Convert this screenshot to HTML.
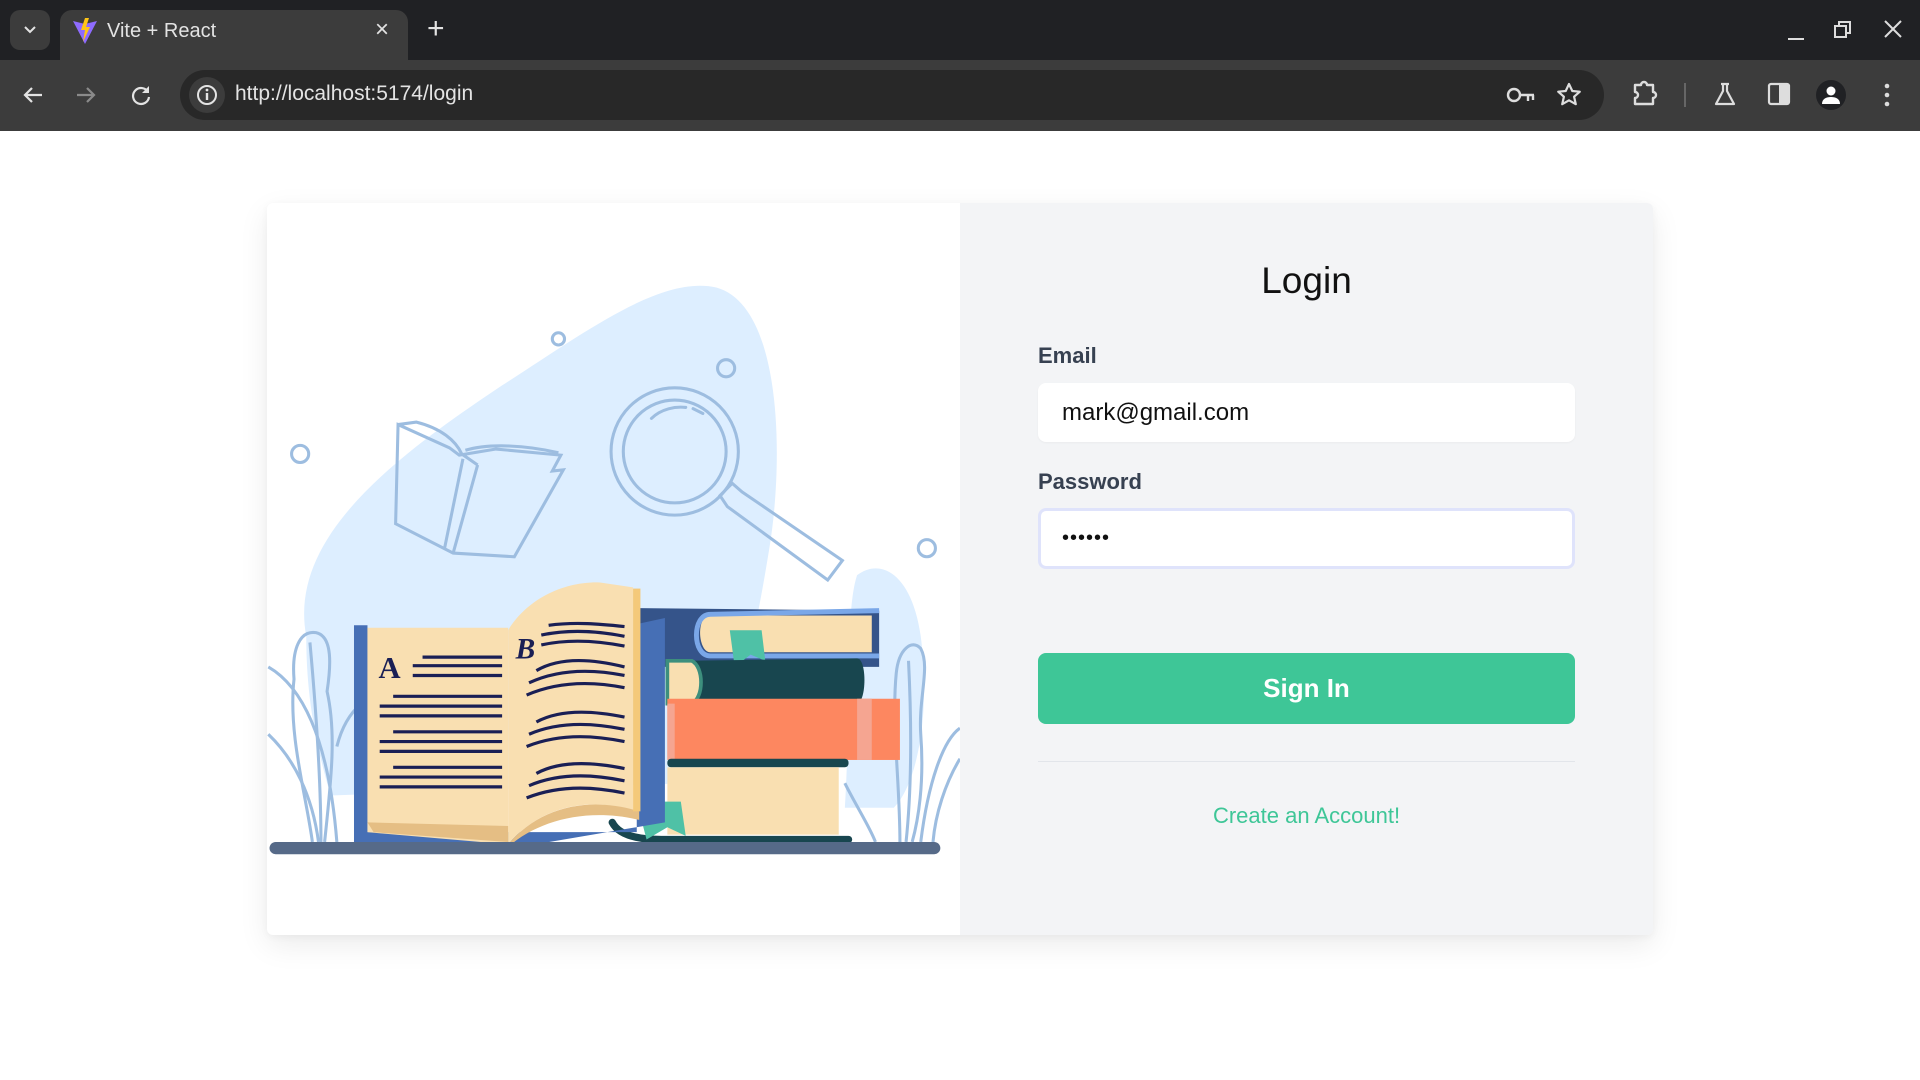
<!DOCTYPE html>
<html><head><meta charset="utf-8"><style>
*{margin:0;padding:0;box-sizing:border-box}
body{width:1920px;height:1080px;background:#fff;font-family:"Liberation Sans",sans-serif;position:relative;overflow:hidden}
.tabs{position:absolute;left:0;top:0;width:1920px;height:60px;background:#202124}
.toolbar{position:absolute;left:0;top:60px;width:1920px;height:71px;background:#3c3c3c}
.tab{position:absolute;left:60px;top:10px;width:348px;height:50px;background:#3c3c3c;border-radius:12px 12px 0 0;color:#e3e3e3;font-size:20px}
.omni{position:absolute;left:180px;top:10px;width:1424px;height:50px;background:#282828;border-radius:25px}
.card{position:absolute;left:267px;top:203px;width:1386px;height:732px;background:#fff;box-shadow:0 10px 30px rgba(0,0,0,.08),0 2px 8px rgba(0,0,0,.04);border-radius:6px;overflow:hidden}
.right{position:absolute;left:693px;top:0;width:693px;height:732px;background:#f3f4f6}
.lbl{position:absolute;left:78px;font-size:22px;font-weight:bold;color:#374151}
.inp{position:absolute;left:78px;width:537px;height:59px;background:#fff;border-radius:8px;font-size:24px;color:#111;padding-left:24px;line-height:59px}
</style></head><body>
<div class="tabs">
 <div style="position:absolute;left:10px;top:10px;width:40px;height:40px;background:#3c3c3c;border-radius:10px"></div>
 <svg style="position:absolute;left:22px;top:24px" width="16" height="12"><path d="M3 3l5 5 5-5" stroke="#e3e3e3" stroke-width="2" fill="none"/></svg>
 <div class="tab">
  <svg style="position:absolute;left:12px;top:8px" width="26" height="28" viewBox="0 0 26 28"><path d="M1 3L13 26 25 3 13 6Z" fill="#8e6bff"/><path d="M13 0l-4 12h4l-2 12 7-15h-4l3-9Z" fill="#ffc517"/></svg>
  <span style="position:absolute;left:47px;top:10px">Vite + React</span>
  <span style="position:absolute;left:315px;top:6px;font-size:24px">×</span>
 </div>
 <span style="position:absolute;left:427px;top:12px;color:#e3e3e3;font-size:30px">+</span>
 <div style="position:absolute;left:1788px;top:38px;width:16px;height:2px;background:#ddd"></div>
 <svg style="position:absolute;left:1834px;top:20px" width="18" height="18"><path d="M1 6h11v11H1zM5 6V2h11v11h-4" stroke="#ddd" stroke-width="2" fill="none"/></svg>
 <svg style="position:absolute;left:1884px;top:20px" width="18" height="18"><path d="M1 1l16 16M17 1L1 17" stroke="#ddd" stroke-width="2"/></svg>
</div>
<div class="toolbar">
 <svg style="position:absolute;left:22px;top:24px" width="22" height="22"><path d="M20 11H3M10 4l-7 7 7 7" stroke="#e3e3e3" stroke-width="2.2" fill="none"/></svg>
 <svg style="position:absolute;left:75px;top:24px" width="22" height="22"><path d="M2 11h17M12 4l7 7-7 7" stroke="#8a8a8a" stroke-width="2.2" fill="none"/></svg>
 <svg style="position:absolute;left:130px;top:24px" width="22" height="22"><path d="M18 8A8 8 0 1 0 19 13" stroke="#e3e3e3" stroke-width="2.2" fill="none"/><path d="M19 2v7h-7" fill="#e3e3e3"/></svg>
 <div class="omni">
  <div style="position:absolute;left:9px;top:7px;width:36px;height:36px;border-radius:18px;background:#3c3c3c"></div>
  <svg style="position:absolute;left:16px;top:14px" width="22" height="22"><circle cx="11" cy="11" r="9" stroke="#e3e3e3" stroke-width="2" fill="none"/><path d="M11 9v7" stroke="#e3e3e3" stroke-width="2.4"/><circle cx="11" cy="6" r="1.4" fill="#e3e3e3"/></svg>
  <span style="position:absolute;left:55px;top:12px;color:#e3e3e3;font-size:21px">http://localhost:5174/login</span>
  <svg style="position:absolute;left:1326px;top:14px" width="30" height="22"><circle cx="8" cy="11" r="6" stroke="#ddd" stroke-width="2.4" fill="none"/><path d="M14 11h14M22 11v6M27 11v5" stroke="#ddd" stroke-width="2.4" fill="none"/></svg>
  <svg style="position:absolute;left:1376px;top:12px" width="26" height="26"><path d="M13 2l3.3 7 7.5.7-5.7 5 1.7 7.5L13 18.3 6.2 22.2 7.9 14.7 2.2 9.7 9.7 9Z" stroke="#ddd" stroke-width="2.2" fill="none" stroke-linejoin="round"/></svg>
 </div>
 <svg style="position:absolute;left:1632px;top:19px" width="26" height="28"><path d="M3 6h6a3 3 0 0 1 6 0h6v7a3 3 0 0 1 0 6v6H3v-6a3 3 0 0 0 0-6z" stroke="#ddd" stroke-width="2.4" fill="none" stroke-linejoin="round"/></svg>
 <div style="position:absolute;left:1684px;top:23px;width:2px;height:24px;background:#666"></div>
 <svg style="position:absolute;left:1713px;top:22px" width="24" height="24"><path d="M8 2h8M10 2v7L3 22h18L14 9V2" stroke="#ddd" stroke-width="2.2" fill="none" stroke-linejoin="round"/></svg>
 <svg style="position:absolute;left:1767px;top:22px" width="24" height="24"><rect x="2" y="2" width="20" height="20" rx="2" stroke="#ddd" stroke-width="2.2" fill="none"/><rect x="12" y="2" width="10" height="20" fill="#ddd"/></svg>
 <div style="position:absolute;left:1816px;top:20px;width:30px;height:30px;border-radius:15px;background:#202124"></div>
 <svg style="position:absolute;left:1820px;top:24px" width="22" height="22"><circle cx="11" cy="7" r="4.5" fill="#fff"/><path d="M2 20c0-5 4-7 9-7s9 2 9 7z" fill="#fff"/></svg>
 <svg style="position:absolute;left:1883px;top:22px" width="8" height="26"><circle cx="4" cy="4" r="2.3" fill="#ddd"/><circle cx="4" cy="13" r="2.3" fill="#ddd"/><circle cx="4" cy="22" r="2.3" fill="#ddd"/></svg>
</div>

<div class="card">
 <svg style="position:absolute;left:0;top:0" width="693" height="732" viewBox="218 166 566 598">
  <path d="M250,520 C235,440 320,375 410,315 C480,270 540,225 585,235 C640,250 640,380 628,450 C615,530 600,600 560,640 L270,650 C255,600 250,560 250,520Z" fill="#ddeeff"/>
  <path d="M700,470 C720,455 745,470 752,520 C760,580 750,640 730,660 L690,660 C695,580 690,500 700,470Z" fill="#ddeeff"/>
  <g stroke="#9dbde0" stroke-width="2.5" fill="none">
   <circle cx="456" cy="277" r="5"/><circle cx="593" cy="301" r="7"/><circle cx="245" cy="371" r="7"/><circle cx="757" cy="448" r="7"/>
   <circle cx="551" cy="369" r="52"/><circle cx="551" cy="369" r="42"/>
   <path d="M532,342 C540,334 552,332 560,333 M566,334 l8,4" stroke-linecap="round"/>
   <path d="M588,405 L598,395 L606,402 L688,458 L676,474 L594,414 Z"/>
   <path d="M325,347 L367,366 L375,372 L405,367 L458,372 L451,385 L460,384 L420,455 L370,452 L323,428 Z"/>
   <path d="M325,347 L340,345 C360,350 372,360 377,371 M377,371 L390,380 M390,380 L370,452 M378,375 L363,448 M380,368 C400,362 430,364 456,370"/>
   <path d="M255,688 C250,650 235,600 240,555 C238,530 245,515 258,517 C272,520 270,545 267,565 C275,600 270,640 265,688 M253,525 C258,580 262,640 262,688"/>
   <path d="M219,545 C245,560 268,600 275,688 M219,600 C240,620 255,650 260,688 M275,610 C280,590 289,580 295,575"/>
   <path d="M735,688 C735,640 728,590 732,550 C734,530 745,522 752,530 C760,545 750,570 752,600 C755,640 750,670 745,688 M742,540 C745,600 744,650 740,688"/>
   <path d="M784,595 C770,605 758,640 752,688 M784,620 C772,640 764,665 762,688 M690,640 C700,660 710,675 715,688"/>
  </g>
  <path d="M522,497 L718,499 L718,545 L522,545 Z" fill="#35548a"/>
  <path d="M580,503 L712,503 L712,533 L580,533 C570,533 568,503 580,503Z" fill="#f9dfb1"/>
  <path d="M718,499 L580,502 C565,502 565,536 580,536 L718,536" stroke="#7aa7e8" stroke-width="4" fill="none"/>
  <path d="M596,515 L622,515 L625,540 L613,535 L600,545 Z" fill="#4fc1a6"/>
  <path d="M560,540 L700,538 C708,538 708,573 700,575 L560,575 Z" fill="#18464f"/>
  <path d="M545,540 L565,540 C575,545 575,570 565,575 L545,575 Z" fill="#f9dfb1" stroke="#3d8f7d" stroke-width="3"/>
  <rect x="545" y="571" width="190" height="50" fill="#fd8760"/>
  <rect x="700" y="571" width="12" height="50" fill="#f5a591"/>
  <rect x="545" y="575" width="6" height="46" fill="#f5a591"/>
  <rect x="545" y="620" width="148" height="7" rx="3" fill="#18464f"/>
  <rect x="545" y="627" width="140" height="55" fill="#f9dfb1"/>
  <path d="M500,672 C505,682 520,686 540,686 L693,686" stroke="#18464f" stroke-width="6" fill="none" stroke-linecap="round"/>
  <path d="M520,655 L556,655 L560,683 L545,676 L528,686 Z" fill="#4fc1a6"/>
  <path d="M289,511 L300,511 L300,680 L520,680 L520,510 L543,505 L543,672 L425,692 L289,690 Z" fill="#466fb5"/>
  <path d="M300,513 L415,513 L415,690 L300,680 Z" fill="#f9dfb1"/>
  <path d="M300,672 L415,675 L415,688 L305,680 Z" fill="#e5be84"/>
  <path d="M415,515 C430,490 460,475 490,476 L517,480 L517,663 C480,650 440,660 415,690 Z" fill="#f9dfb1"/>
  <path d="M415,690 C440,660 480,650 522,663 L522,670 C480,660 440,670 415,692Z" fill="#e5be84"/>
  <rect x="517" y="481" width="6" height="182" fill="#f4c97a"/>
  <text x="309" y="554" font-family="Liberation Serif,serif" font-weight="bold" font-size="25" fill="#1a1f55">A</text>
  <text x="421" y="538" font-family="Liberation Serif,serif" font-weight="bold" font-style="italic" font-size="24" fill="#1a1f55">B</text>
  <g stroke="#1a1f55" stroke-width="2.6" fill="none">
   <path d="M345,537H410M337,544H410M337,552H410M321,569H410M310,577H410M310,585H410M321,598H410M310,606H410M310,614H410M321,627H410M310,635H410M310,643H410"/>
   <path d="M448,511C470,508 490,510 510,512M442,519C465,514 490,516 510,520M442,527C465,522 490,524 510,528"/>
   <path d="M438,548C460,535 490,540 510,545M432,558C460,545 490,548 510,552M430,568C460,555 490,558 510,562"/>
   <path d="M438,590C460,578 490,582 510,586M432,600C460,588 490,592 510,596M430,610C460,598 490,602 510,606"/>
   <path d="M438,632C460,620 490,624 510,628M432,642C460,630 490,634 510,638M430,652C460,640 490,644 510,648"/>
  </g>
  <rect x="220" y="688" width="548" height="10" rx="5" fill="#566a88"/>
 </svg>
 <div class="right">
  <div style="position:absolute;left:0;width:693px;top:57px;text-align:center;font-size:37px;color:#111">Login</div>
  <div class="lbl" style="top:140px">Email</div>
  <div class="inp" style="top:180px;box-shadow:0 1px 2px rgba(0,0,0,.04)">mark@gmail.com</div>
  <div class="lbl" style="top:266px">Password</div>
  <div class="inp" style="top:305px;height:61px;border:3px solid #dfe3fb;line-height:55px;padding-left:21px;font-size:20px;letter-spacing:1px">••••••</div>
  <div style="position:absolute;left:78px;top:450px;width:537px;height:71px;background:#3ec697;border-radius:8px;color:#fff;font-size:26px;font-weight:bold;text-align:center;line-height:71px">Sign In</div>
  <div style="position:absolute;left:78px;top:558px;width:537px;height:1px;background:#e2e5ea"></div>
  <div style="position:absolute;left:0;width:693px;top:600px;text-align:center;font-size:22px;color:#3ec697">Create an Account!</div>
 </div>
</div>
</body></html>
